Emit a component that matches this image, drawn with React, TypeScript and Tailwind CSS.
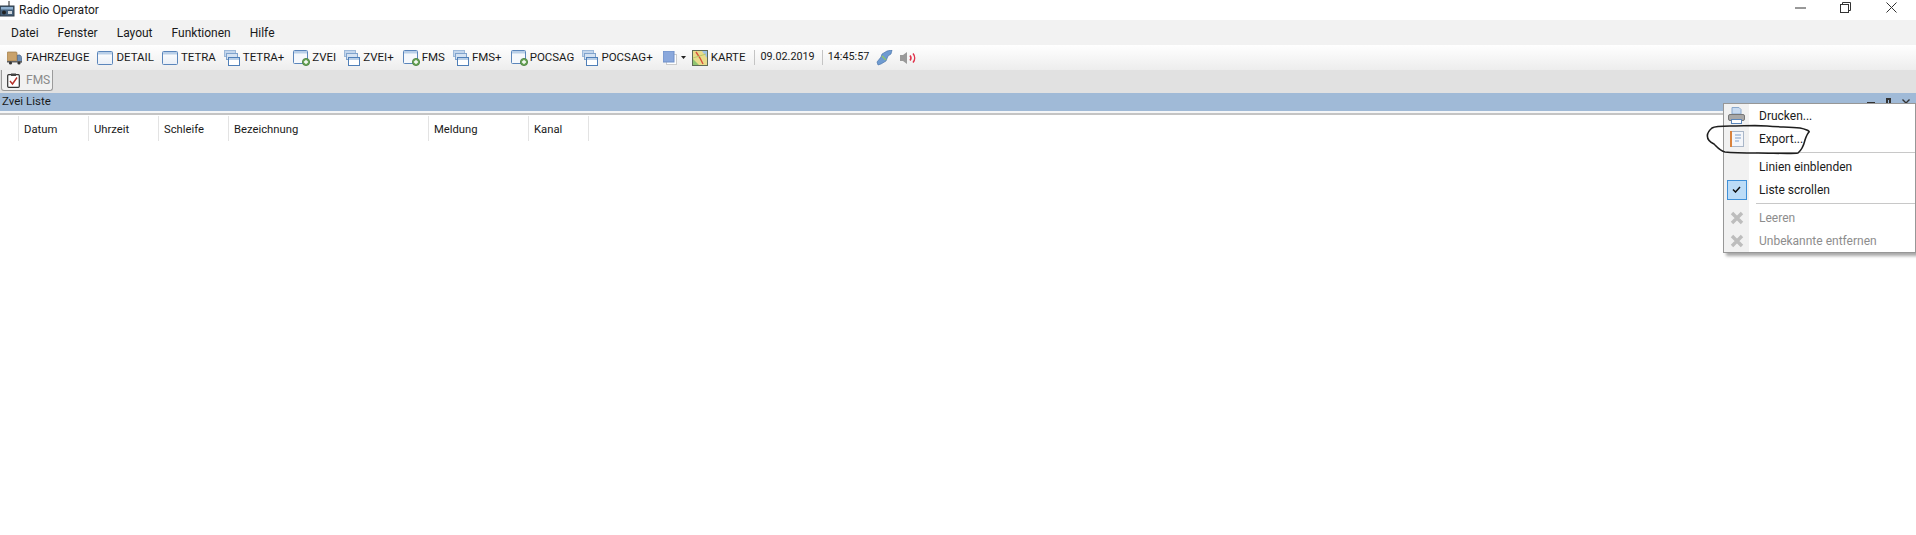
import React from "react";

function Win() {
  return (
    <svg width="16" height="14" viewBox="0 0 16 14" className="shrink-0">
      <defs>
        <linearGradient id="wg" x1="0" y1="0" x2="0" y2="1"><stop offset="0" stopColor="#ffffff" /><stop offset="1" stopColor="#e8eef6" /></linearGradient>
      </defs>
      <rect x="0.5" y="0.5" width="15" height="13" rx="1" fill="url(#wg)" stroke="#5b86bb" />
      <rect x="1" y="1" width="14" height="2.5" fill="#b9cfe8" />
    </svg>
  );
}
function WinPlus() {
  return (
    <svg width="18" height="16" viewBox="0 0 18 16" className="shrink-0">
      <rect x="0.5" y="0.5" width="14" height="13" rx="1" fill="#f5f8fc" stroke="#5b86bb" />
      <rect x="1" y="1" width="13" height="2.5" fill="#b9cfe8" />
      <circle cx="13" cy="12" r="3.6" fill="#6fa85c" stroke="#3f7a35" strokeWidth="0.8" />
      <path d="M11 12h4M13 10v4" stroke="#ffffff" strokeWidth="1.3" />
    </svg>
  );
}
function Stack() {
  return (
    <svg width="16" height="16" viewBox="0 0 16 16" className="shrink-0">
      <rect x="0.5" y="0.5" width="11" height="6" fill="#c3d6ec" stroke="#9db9da" />
      <rect x="2.5" y="3.5" width="11" height="6" fill="#d4e2f2" stroke="#7fa2cc" />
      <rect x="4.5" y="7.5" width="11" height="8" fill="#ffffff" stroke="#4f7fb8" />
      <rect x="5" y="8" width="10" height="2" fill="#b9cfe8" />
    </svg>
  );
}
function Truck() {
  return (
    <svg width="15" height="15" viewBox="0 0 15 15" className="shrink-0">
      <rect x="0" y="2" width="10" height="9" rx="1" fill="#c9a26b" stroke="#9a7a4a" strokeWidth="0.7" />
      <path d="M10.5 5h2.500l2 2.500V12h-4.500z" fill="#6f8fb5" stroke="#47607f" strokeWidth="0.7" />
      <rect x="0" y="11" width="15" height="1.500" fill="#5f5f5f" />
      <circle cx="3.500" cy="13" r="1.600" fill="#333" />
      <circle cx="12" cy="13" r="1.600" fill="#333" />
    </svg>
  );
}
function Karte() {
  return (
    <svg width="16" height="16" viewBox="0 0 16 16" className="shrink-0">
      <rect x="0.500" y="0.500" width="15" height="15" fill="#e8dc8a" stroke="#5f6b55" />
      <path d="M1 9l6 6H1z" fill="#8fc46f" />
      <path d="M10 1h5v7z" fill="#9ec3e6" />
      <path d="M4 2l4 6 3 6" fill="none" stroke="#d9503c" strokeWidth="1.400" />
      <path d="M1 8l13-4" stroke="#b8c96a" strokeWidth="1" />
    </svg>
  );
}

function Tool({ icon, label, className = "" }: { icon: React.ReactNode; label: string; className?: string }) {
  return (
    <div className={`flex items-center ${className}`}>
      {icon}
      <span>{label}</span>
    </div>
  );
}

function MenuRow({ icon, label, disabled }: { icon?: React.ReactNode; label: string; disabled?: boolean }) {
  return (
    <div className="flex h-[23px] items-center">
      <div className="flex w-[25px] shrink-0 justify-center">{icon}</div>
      <span className={`ml-[10px] mt-[1px] ${disabled ? "text-[#8d8d8d]" : "text-[#1a1a1a]"}`}>{label}</span>
    </div>
  );
}

function GreyX() {
  return (
    <svg width="14" height="14" viewBox="0 0 14 14">
      <path d="M2 2l10 10M12 2L2 12" stroke="#bdbdbd" strokeWidth="3.400" />
    </svg>
  );
}

const cols = [
  ["Datum", "w-[70px]"],
  ["Uhrzeit", "w-[70px]"],
  ["Schleife", "w-[70px]"],
  ["Bezeichnung", "w-[200px]"],
  ["Meldung", "w-[100px]"],
  ["Kanal", "w-[60px]"],
];

export default function App() {
  return (
    <div className="relative flex h-[535px] w-[1916px] flex-col overflow-hidden bg-white font-['Roboto','Open_Sans',sans-serif] text-[12px] leading-none text-[#1a1a1a]">
      {/* title bar */}
      <div className="flex h-[20px] shrink-0 items-center justify-between">
        <div className="flex items-center">
          <svg width="15" height="16" viewBox="0 0 15 16" className="-mt-[3px]">
            <path d="M9 0v5" stroke="#444" strokeWidth="1.200" />
            <rect x="0" y="5" width="14" height="10" fill="#45607a" stroke="#2f3b47" />
            <rect x="1" y="6" width="12" height="2.500" fill="#8fb0cf" />
            <circle cx="4" cy="11.500" r="2" fill="#222" />
            <rect x="8" y="10" width="4" height="3" fill="#cfd6dc" />
          </svg>
          <span className="ml-[4px] text-[12px]">Radio Operator</span>
        </div>
        <div className="-mt-[6px] flex items-center">
          <svg width="11" height="2" viewBox="0 0 11 2" className="mr-[34px] mt-[2px]"><path d="M0 1h11" stroke="#333" /></svg>
          <svg width="11" height="11" viewBox="0 0 11 11" className="mr-[35px]">
            <path d="M2.500 2.500V.5h8v8h-2" fill="none" stroke="#333" />
            <rect x="0.500" y="2.500" width="8" height="8" fill="none" stroke="#333" />
          </svg>
          <svg width="11" height="11" viewBox="0 0 11 11" className="mr-[19px]"><path d="M.5.5l10 10M10.500.5l-10 10" stroke="#333" /></svg>
        </div>
      </div>

      {/* menu bar */}
      <div className="flex h-[25px] shrink-0 items-center gap-[19px] bg-[#f2f2f2] pl-[11px] text-[12px]">
        <span>Datei</span>
        <span>Fenster</span>
        <span>Layout</span>
        <span>Funktionen</span>
        <span>Hilfe</span>
      </div>

      {/* tool bar */}
      <div className="flex h-[25px] shrink-0 items-center bg-gradient-to-b from-[#ffffff] to-[#ededed] pl-[7px] text-[11.5px]">
        <Tool icon={<Truck />} label="FAHRZEUGE" className="gap-[4px]" />
        <Tool icon={<Win />} label="DETAIL" className="ml-[8px] gap-[3px]" />
        <Tool icon={<Win />} label="TETRA" className="ml-[8px] gap-[3px]" />
        <Tool icon={<Stack />} label="TETRA+" className="ml-[8px] gap-[3px]" />
        <Tool icon={<WinPlus />} label="ZVEI" className="ml-[9px] gap-[1px]" />
        <Tool icon={<Stack />} label="ZVEI+" className="ml-[8px] gap-[3px]" />
        <Tool icon={<WinPlus />} label="FMS" className="ml-[9px] gap-[1px]" />
        <Tool icon={<Stack />} label="FMS+" className="ml-[8px] gap-[3px]" />
        <Tool icon={<WinPlus />} label="POCSAG" className="ml-[9px] gap-[1px]" />
        <Tool icon={<Stack />} label="POCSAG+" className="ml-[8px] gap-[3px]" />
        <div className="ml-[10px] flex items-center gap-[4px]">
          <svg width="14" height="14" viewBox="0 0 14 14">
            <rect x="3.500" y="3.500" width="10" height="10" fill="#fff" stroke="#ccc" />
            <rect x="0" y="0" width="11" height="11" fill="#8aa8dc" stroke="#6e8fc8" />
          </svg>
          <svg width="5" height="3" viewBox="0 0 5 3"><path d="M0 0h5L2.500 3z" fill="#222" /></svg>
        </div>
        <Tool icon={<Karte />} label="KARTE" className="ml-[6px] gap-[3px]" />
        <div className="ml-[9px] h-[15px] w-px bg-[#c4c4c4]" />
        <span className="ml-[5px] text-[10.8px]">09.02.2019</span>
        <div className="ml-[7px] h-[15px] w-px bg-[#c4c4c4]" />
        <span className="ml-[5px] text-[10.8px]">14:45:57</span>
        <svg width="17" height="16" viewBox="0 0 17 16" className="ml-[7px]">
          <path d="M1 12L5 7l1-3 5-3 5-1-1 4-3 2-2 5-5 3-3 1z" fill="#6f9bd1" stroke="#3f6ca5" strokeWidth="0.600" />
          <path d="M6 6l4 4" stroke="#8ec56a" strokeWidth="1.400" />
        </svg>
        <svg width="16" height="12" viewBox="0 0 16 12" className="ml-[7px]">
          <path d="M0 3h3l4-3v12L3 9H0z" fill="#9a9a9a" />
          <path d="M10 3.500a4 4 0 0 1 0 5" fill="none" stroke="#e0324b" strokeWidth="1.500" />
          <path d="M13 1.500a7 7 0 0 1 0 9" fill="none" stroke="#e0324b" strokeWidth="1.500" />
        </svg>
      </div>

      {/* tabs */}
      <div className="flex h-[23px] shrink-0 items-start bg-[#e1e1e1] pl-[1px]">
        <div className="flex h-[21px] w-[52px] items-center gap-[6px] rounded-b-[3px] border border-t-0 border-[#9b9b9b] bg-[#f1f1f1] pl-[5px] text-[12px] text-[#8a8a8a]">
          <svg width="13" height="15" viewBox="0 0 13 15" className="shrink-0">
            <rect x="0.700" y="1.700" width="11.600" height="12.600" rx="1" fill="#fff" stroke="#333" strokeWidth="1.200" />
            <rect x="4" y="0.500" width="5" height="2.500" fill="#444" />
            <path d="M3 8l2.500 3L10 4.500" fill="none" stroke="#b5302a" strokeWidth="1.400" />
          </svg>
          <span>FMS</span>
        </div>
      </div>

      {/* panel header */}
      <div className="flex h-[18px] shrink-0 items-center justify-between bg-[#a0bad7] pl-[2px] text-[11.5px]">
        <span>Zvei Liste</span>
      </div>
      <div className="h-[2px] shrink-0 bg-[#f4f6f8]" />
      <div className="h-[2px] shrink-0 bg-[#c4c4c4]" />
      <div className="h-px shrink-0 bg-white" />

      {/* list header */}
      <div className="flex h-[25px] shrink-0 items-center pl-[18px] text-[11.25px]">
        {cols.map(([name, w]) => (
          <div key={name} className={`flex h-full items-center border-l border-[#e3e3e3] pl-[5px] pt-[2px] ${w}`}>
            {name}
          </div>
        ))}
        <div className="h-full border-l border-[#e3e3e3]" />
      </div>

      {/* panel buttons, partly under the menu */}
      <div className="absolute left-[1867px] top-[98px] flex items-start">
        <div className="mt-[4px] h-[2px] w-[8px] bg-[#333]" />
        <div className="ml-[11px] h-[10px] w-[5px] border-2 border-b-0 border-[#333]" />
        <svg width="8" height="8" viewBox="0 0 8 8" className="ml-[11px] mt-[1px]"><path d="M.5.5l3.500 3.500 3.500-3.500" fill="none" stroke="#333" strokeWidth="1.400" /></svg>
      </div>

      {/* context menu */}
      <div className="absolute left-[1723px] top-[103px] w-[193px] border border-[#979797] bg-white text-[12px] shadow-[3px_3px_3px_rgba(0,0,0,0.35)]">
        <div className="absolute bottom-0 left-0 top-0 w-[25px] bg-[#f1f1f1]" />
        <div className="relative">
          <MenuRow
            label="Drucken..."
            icon={
              <svg width="17" height="17" viewBox="0 0 17 17">
                <path d="M4 0.500h7l2 2V7H4z" fill="#c8daf0" stroke="#8aa8cc" />
                <rect x="0.500" y="7.500" width="16" height="6" rx="1.500" fill="#a8a8a8" stroke="#777" />
                <rect x="3.500" y="12.500" width="10" height="4" fill="#fff" stroke="#5b86bb" />
              </svg>
            }
          />
          <MenuRow
            label="Export..."
            icon={
              <svg width="14" height="16" viewBox="0 0 14 16">
                <rect x="1.500" y="0.500" width="12" height="15" fill="#f4f6fa" stroke="#a9b6c8" />
                <rect x="0" y="0" width="2" height="16" fill="#d9823c" />
                <path d="M5 4h6M5 7h6M5 10h4" stroke="#7f9fc8" />
              </svg>
            }
          />
          <div className="my-[2px] ml-[32px] h-px bg-[#c8c8c8]" />
          <MenuRow label="Linien einblenden" />
          <MenuRow
            label="Liste scrollen"
            icon={
              <div className="flex h-[20px] w-[20px] items-center justify-center border border-[#3f90d8] bg-[#bcdcf7]">
                <svg width="9" height="7" viewBox="0 0 9 7"><path d="M1 3.500l2.500 2.500L8 1" fill="none" stroke="#111" strokeWidth="1.500" /></svg>
              </div>
            }
          />
          <div className="my-[2px] ml-[32px] h-px bg-[#c8c8c8]" />
          <MenuRow label="Leeren" disabled icon={<GreyX />} />
          <MenuRow label="Unbekannte entfernen" disabled icon={<GreyX />} />
        </div>
      </div>

      {/* hand drawn circle */}
      <svg width="120" height="40" viewBox="0 0 120 40" className="absolute left-[1700px] top-[120px]">
        <path
          d="M12 8C15 6 20 6 30 6c14 0 26-1 37 0 12 1 22 1 33 2 5 1 10 3 9 4-2 2-3 5-4 8-1 4-2 9-7 13-6 1-26 0-40 0-10 0-24 0-33-1-5-1-8-5-11-8C4 19 7 12 12 8z"
          fill="none"
          stroke="#1e1e1e"
          strokeWidth="1.600"
        />
      </svg>
    </div>
  );
}
